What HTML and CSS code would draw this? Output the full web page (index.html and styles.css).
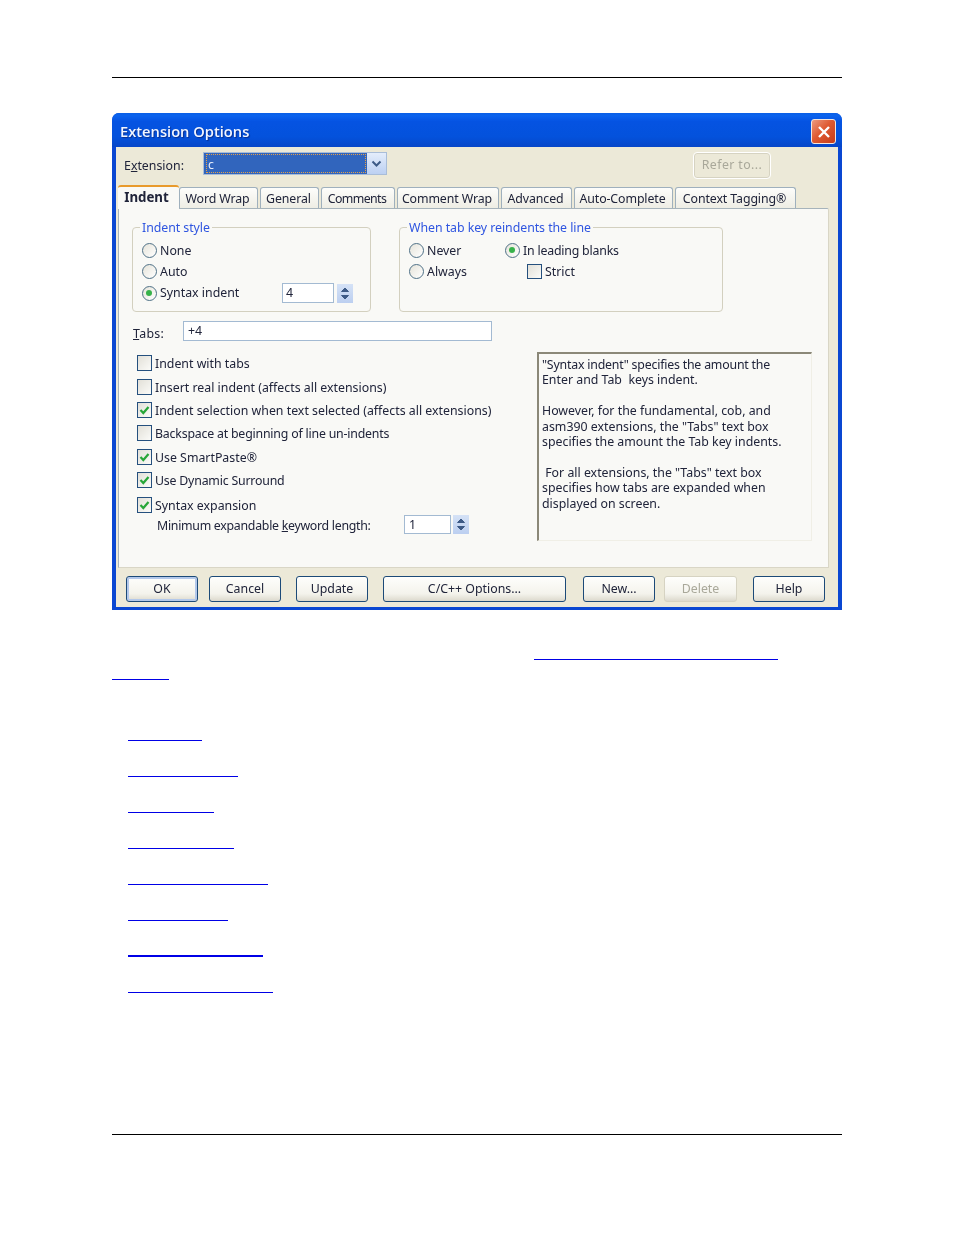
FILE: index.html
```html
<!DOCTYPE html>
<html lang="en">
<head>
<meta charset="utf-8">
<title>Extension Options</title>
<link rel="stylesheet" href="styles.css">
</head>
<body>
<div class="page">
  <hr class="rule rule-top">
  <section class="dialog">
    <header class="titlebar">
      <span class="title">Extension Options</span>
      <span class="close"><svg viewBox="0 0 14 14" width="14" height="14"><path d="M2 2L12 12M12 2L2 12" stroke="#fff" stroke-width="2.4" fill="none"/></svg></span>
    </header>
    <div class="client">
      <div class="ext-row">
        <span class="ext-label">E<u>x</u>tension:</span>
        <div class="combo"><span class="combo-value"><span class="combo-focus">c</span></span>
          <span class="combo-arrow"><svg viewBox="0 0 11 8" width="11" height="8"><path d="M1.5 1.5L5.5 5.5L9.5 1.5" stroke="#3d5a86" stroke-width="2" fill="none"/></svg></span>
        </div>
        <span class="refer">Refer to...</span>
      </div>
      <nav class="tabs">
        <span class="tab tab-active">Indent</span>
        <span class="tab">Word Wrap</span>
        <span class="tab">General</span>
        <span class="tab tab-tight">Comments</span>
        <span class="tab">Comment Wrap</span>
        <span class="tab">Advanced</span>
        <span class="tab">Auto-Complete</span>
        <span class="tab">Context Tagging®</span>
      </nav>
      <div class="panel">
        <div class="groups">
          <div class="group group-a">
            <span class="legend">Indent style</span>
            <div class="opt"><span class="radio"></span>None</div>
            <div class="opt"><span class="radio"></span>Auto</div>
            <div class="opt opt-spin"><span class="radio radio-on"></span><span class="opt-text">Syntax indent</span>
              <span class="field field-four">4</span>
              <span class="spin"><svg viewBox="0 0 16 19" width="16" height="19"><path d="M4.500 7.500L8 4L11.500 7.500Z M4.500 11.500L8 15L11.500 11.500Z" fill="#3d5a86" stroke="#3d5a86"/></svg></span>
            </div>
          </div>
          <div class="group group-b">
            <span class="legend">When tab key reindents the line</span>
            <div class="opt-grid">
              <div class="opt"><span class="radio"></span>Never</div>
              <div class="opt tight"><span class="radio radio-on"></span>In leading blanks</div>
              <div class="opt"><span class="radio"></span>Always</div>
              <div class="opt opt-strict"><span class="check"></span>Strict</div>
            </div>
          </div>
        </div>
        <div class="tabs-row">
          <span class="tabs-label"><u>T</u>abs:</span>
          <span class="field field-tabs">+4</span>
        </div>
        <div class="lower">
          <div class="checks">
            <div class="chk"><span class="check"></span>Indent with tabs</div>
            <div class="chk"><span class="check"></span>Insert real indent (affects all extensions)</div>
            <div class="chk"><span class="check"><svg viewBox="0 0 13 13" width="14" height="14"><path d="M2.500 6.500L5.300 9.500L10.500 3.500" stroke="#27a638" stroke-width="2.200" fill="none"/></svg></span>Indent selection when text selected (affects all extensions)</div>
            <div class="chk tight"><span class="check"></span>Backspace at beginning of line un-indents</div>
            <div class="chk"><span class="check"><svg viewBox="0 0 13 13" width="14" height="14"><path d="M2.500 6.500L5.300 9.500L10.500 3.500" stroke="#27a638" stroke-width="2.200" fill="none"/></svg></span>Use SmartPaste®</div>
            <div class="chk tight"><span class="check"><svg viewBox="0 0 13 13" width="14" height="14"><path d="M2.500 6.500L5.300 9.500L10.500 3.500" stroke="#27a638" stroke-width="2.200" fill="none"/></svg></span>Use Dynamic Surround</div>
            <div class="chk"><span class="check"><svg viewBox="0 0 13 13" width="14" height="14"><path d="M2.500 6.500L5.300 9.500L10.500 3.500" stroke="#27a638" stroke-width="2.200" fill="none"/></svg></span>Syntax expansion</div>
            <div class="min-row">
              <span class="min-label">Minimum expandable <u>k</u>eyword length:</span>
              <span class="field field-one">1</span>
              <span class="spin"><svg viewBox="0 0 16 19" width="16" height="19"><path d="M4.500 7.500L8 4L11.500 7.500Z M4.500 11.500L8 15L11.500 11.500Z" fill="#3d5a86" stroke="#3d5a86"/></svg></span>
            </div>
          </div>
          <div class="info">
            <p><span class="tight">"Syntax indent" specifies the amount the</span><br>Enter and Tab&nbsp; keys indent.</p>
            <p>However, for the fundamental, cob, and<br>asm390 extensions, the "Tabs" text box<br>specifies the amount the Tab key indents.</p>
            <p>&nbsp;For all extensions, the "Tabs" text box<br>specifies how tabs are expanded when<br>displayed on screen.</p>
          </div>
        </div>
      </div>
      <div class="buttons">
        <span class="btn btn-default">OK</span>
        <span class="btn btn-cancel">Cancel</span>
        <span class="btn btn-update">Update</span>
        <span class="btn btn-cpp">C/C++ Options...</span>
        <span class="btn btn-new">New...</span>
        <span class="btn btn-delete">Delete</span>
        <span class="btn btn-help">Help</span>
      </div>
    </div>
  </section>
  <div class="links">
    <a class="link link-1" href="#"></a>
    <a class="link link-2" href="#"></a>
    <ul class="link-list">
      <li><a class="link link-w74" href="#"></a></li>
      <li><a class="link link-w110" href="#"></a></li>
      <li><a class="link link-w86" href="#"></a></li>
      <li><a class="link link-w106" href="#"></a></li>
      <li><a class="link link-w140" href="#"></a></li>
      <li><a class="link link-w100" href="#"></a></li>
      <li><a class="link link-w135" href="#"></a></li>
      <li><a class="link link-w145" href="#"></a></li>
    </ul>
  </div>
  <hr class="rule rule-bottom">
</div>
</body>
</html>
```
FILE: styles.css
```css
* { box-sizing: border-box; }
html, body { margin: 0; padding: 0; background: #fff; }
.page { width: 954px; height: 1235px; padding: 77px 112px 0; overflow: hidden; }
.rule { margin: 0; border: 0; height: 1px; background: #000; width: 730px; }
.rule-bottom { margin-top: 475px; }
.tight { letter-spacing: -0.2px; }

.dialog {
  margin-top: 35px; width: 730px; height: 497px;
  background: #0a47d2; border-radius: 7px 7px 0 0;
  padding: 0 4px 3px;
  font: 12.350px/16px "Noto Sans", Tahoma, sans-serif; color: #20243a;
  filter: blur(0.3px);
  display: flex; flex-direction: column;
}
.titlebar {
  height: 34px; margin: 0 -4px; padding: 0 6px 0 8px;
  border-radius: 7px 7px 0 0;
  background: linear-gradient(#0a5fe6 0, #0b63ee 8%, #0553e2 25%, #0452dc 70%, #0646c8 100%);
  display: flex; align-items: center; justify-content: space-between;
}
.title { font: 600 14.700px/20px "Open Sans", sans-serif; color: #f2f6ff; text-shadow: 1px 1px 1px #0a2f90; padding-top: 2px; }
.close {
  width: 25px; height: 25px; margin-top: 3px; border: 1px solid #f2e6df; border-radius: 3px;
  background: linear-gradient(135deg, #ec9a80, #df5a32 45%, #c63c1a);
  display: flex; align-items: center; justify-content: center;
}
.client { flex: 1; background: #ece9d8; padding: 5px 9px 0 2px; display: flex; flex-direction: column; }

.ext-row { height: 26px; padding-left: 6px; display: flex; align-items: flex-start; }
.ext-label { width: 79px; line-height: 27px; }
.combo { width: 184px; height: 23px; display: flex; background: #a9bdd8; padding: 1px; }
.combo-value { flex: 1; background: #3165bd; padding: 1px 1px 1px 2px; }
.combo-focus { display: block; height: 100%; border: 1px dotted #e3a04a; color: #e8eefc; padding-left: 1px; line-height: 19px; }
.combo-arrow { width: 19px; background: linear-gradient(#e4edfb, #bcd0f2); display: flex; align-items: center; justify-content: center; }
.refer {
  margin-left: 307px; width: 76px; height: 25px; margin-top: 1px;
  border: 1px solid #d6d3c2; border-radius: 3px; outline: 1px solid #fff;
  color: #a9a89a; text-align: center; line-height: 22px; letter-spacing: 0.4px;
}

.tabs {
  height: 25px; margin-top: 5px; align-items: end;
  display: grid; grid-template-columns: 59px 79px 59px 74px 102px 71px 99px 121px; column-gap: 2px;
}
.tab {
  height: 21px; border: 1px solid #9fb0bd; border-bottom: 0; border-radius: 3px 3px 0 0;
  background: linear-gradient(#fdfdfb, #eeede4); text-align: center; line-height: 21px; letter-spacing: -0.1px; padding-right: 2px;
}
.tab-tight { letter-spacing: -0.6px; }
.tab-active {
  height: 24px; margin-right: -2px; position: relative; z-index: 1; margin-bottom: -1px;
  border: 0; border-top: 2px solid #e89a2c; background: #f9f9f6; letter-spacing: 0;
  font-size: 13.300px; font-weight: 700; line-height: 21px; border-radius: 3px 3px 0 0; padding-right: 4px;
}

.panel {
  height: 360px; background: #f9f9f6; border: 1px solid #a6b3bb; border-color: #a6b3bb #d9d6c6 #d9d6c6 #a6b3bb;
  border-radius: 0 2px 0 0; padding: 18px 0 0 13px;
}
.groups { display: flex; height: 85px; }
.group { position: relative; height: 85px; border: 1px solid #d3d0bf; border-radius: 4px; padding-top: 12px; }
.group-a { width: 239px; padding-left: 9px; }
.group-b { width: 324px; margin-left: 28px; padding-left: 9px; }
.legend { position: absolute; top: -8px; left: 7px; padding: 0 2px; background: #f9f9f6; color: #2f55e0; letter-spacing: -0.05px; }
.opt { height: 21px; display: flex; align-items: center; gap: 3px; }
.opt-spin { height: 22px; }
.opt-text { width: 119px; }
.field-four + .spin { margin-left: 0; }
.opt-grid { display: grid; grid-template-columns: 96px auto; }
.opt-strict { padding-left: 22px; }
.radio {
  width: 15px; height: 15px; border-radius: 50%; border: 1.500px solid #4f7187;
  background: linear-gradient(135deg, #e6e4da, #fff); flex: none; position: relative;
}
.radio-on::after {
  content: ""; position: absolute; left: 3px; top: 3px; width: 6px; height: 6px; border-radius: 50%;
  background: #37b24a;
}
.check {
  width: 15px; height: 15px; border: 1px solid #25507e; flex: none;
  background: linear-gradient(135deg, #e2e0d8, #fbfbf8); display: flex;
}
.chk .check { height: 16px; margin-top: -2px; }
.field { background: #fff; border: 1px solid #a3bad2; display: block; line-height: 17px; padding-left: 4px; }
.field-four { width: 52px; height: 20px; flex: none; padding-left: 3px; }
.spin { width: 16px; height: 19px; background: linear-gradient(#d5e2f6, #bccff0); flex: none; margin-left: 2px; display: flex; }

.tabs-row { display: flex; align-items: center; margin-top: 9px; height: 20px; padding-left: 1px; }
.tabs-label { width: 50px; padding-top: 5px; letter-spacing: 0.3px; }
.field-tabs { width: 309px; height: 20px; }

.lower { display: flex; margin-top: 11px; }
.checks {
  margin: 4px 0 0 5px; width: 395px; height: 188px; align-items: start;
  display: grid; grid-template-rows: 24px 23px 23px 24px 23px 25px 20px 16px;
  grid-auto-columns: 1fr;
}
.chk { display: flex; align-items: center; gap: 3px; height: 16px; }
.min-row { display: flex; align-items: center; padding-left: 20px; height: 16px; }
.min-row .field, .min-row .spin { margin-top: -3px; }
.min-label { width: 247px; letter-spacing: -0.28px; }
.field-one { width: 47px; height: 19px; flex: none; }
.info {
  margin: 0 0 0 5px; width: 275px; height: 189px; padding: 3px 0 0 3px;
  border-style: solid; border-color: #8b8878 #f0efe6 #f0efe6 #8b8878; border-width: 2px 1px 1px 2px;
  line-height: 15.400px;
}
.info p { margin: 0 0 15.400px; }

.buttons { display: flex; padding: 8px 0 0 8px; }
.btn {
  height: 26px; width: 72px; border: 1px solid #1c4a78; border-radius: 3px;
  background: linear-gradient(#fefefc, #f4f3ec 70%, #dcd9cd);
  text-align: center; line-height: 24px; flex: none;
}
.btn-default { box-shadow: inset 0 0 0 2px #b3c8ea; }
.btn-cancel { margin-left: 11px; }
.btn-update { margin-left: 15px; }
.btn-cpp { margin-left: 15px; width: 183px; }
.btn-new { margin-left: 17px; }
.btn-delete { margin-left: 9px; width: 73px; color: #a9a89a; border-color: #d6d3c2; }
.btn-help { margin-left: 16px; }

.links { position: relative; height: 0; }
.link { display: block; border-bottom: 1px solid #0000e6; height: 0; }
.link-1 { width: 244px; margin: 49px 0 0 422px; }
.link-2 { width: 57px; margin-top: 19px; }
.link-list { list-style: none; margin: 25px 0 0 16px; padding: 0; }
.link-list li { height: 36px; padding-top: 35px; }
.link-w74 { width: 74px; }
.link-w110 { width: 110px; }
.link-w86 { width: 86px; }
.link-w106 { width: 106px; }
.link-w140 { width: 140px; }
.link-w100 { width: 100px; }
.link-w135 { width: 135px; border-bottom-width: 2px; margin-top: -1px; }
.link-w145 { width: 145px; }
```
